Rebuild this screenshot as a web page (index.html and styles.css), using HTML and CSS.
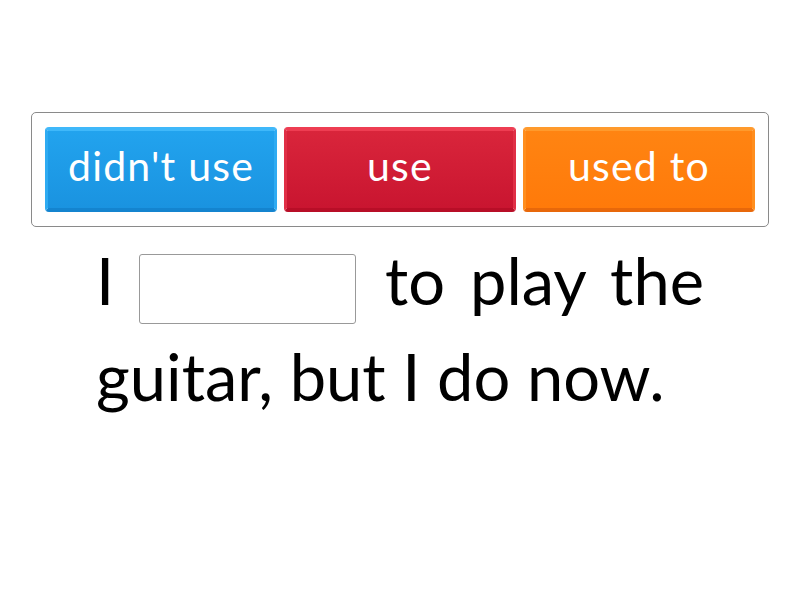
FILE: index.html
```html
<!DOCTYPE html>
<html>
<head>
<meta charset="utf-8">
<link rel="stylesheet" href="styles.css">
</head>
<body>
<div class="page">
  <div class="bank">
    <div class="tile blue">didn't use</div>
    <div class="tile red">use</div>
    <div class="tile orange">used to</div>
  </div>
  <p class="sentence">I <span class="gap"></span> to play the guitar, but I do now.</p>
</div>
</body>
</html>
```
FILE: styles.css
```css
html, body {
  margin: 0;
  padding: 0;
  background: #fff;
}
.page {
  width: 800px;
  height: 600px;
  padding-top: 112px;
  box-sizing: border-box;
  font-family: "Lato", "Open Sans", sans-serif;
}
.bank {
  margin: 0 31px;
  height: 115px;
  box-sizing: border-box;
  border: 1px solid #8a8a8a;
  border-radius: 5px;
  padding: 14px 13px;
  display: flex;
  gap: 7px;
}
.tile {
  flex: 1;
  height: 85px;
  border-radius: 4px;
  color: #fff;
  font-size: 41px;
  letter-spacing: 1.2px;
  display: flex;
  align-items: center;
  justify-content: center;
  box-sizing: border-box;
  border-top: 4px solid;
  border-left: 3px solid;
  border-right: 3px solid;
  border-bottom: 4px solid;
  padding-bottom: 8px;
}
.blue {
  background: linear-gradient(#22a3ee, #1a93e0);
  border-top-color: #3fb8fa;
  border-left-color: #2eabf2;
  border-right-color: #2eabf2;
  border-bottom-color: #1484cf;
}
.red {
  background: linear-gradient(#d9253b, #c91530);
  border-top-color: #ee3d52;
  border-left-color: #e02f46;
  border-right-color: #e02f46;
  border-bottom-color: #b80e27;
}
.orange {
  background: linear-gradient(#ff8412, #ff7a0a);
  border-top-color: #ff9a2c;
  border-left-color: #ff8e1e;
  border-right-color: #ff8e1e;
  border-bottom-color: #e8680a;
}
.sentence {
  margin: 5px 96px 0 96px;
  font-size: 65px;
  line-height: 96px;
  color: #000;
  text-align: justify;
}
.gap {
  display: inline-block;
  width: 215px;
  height: 68px;
  border: 1px solid #999;
  border-radius: 3px;
  vertical-align: -19px;
  margin: 0 4px 0 0;
}
```
